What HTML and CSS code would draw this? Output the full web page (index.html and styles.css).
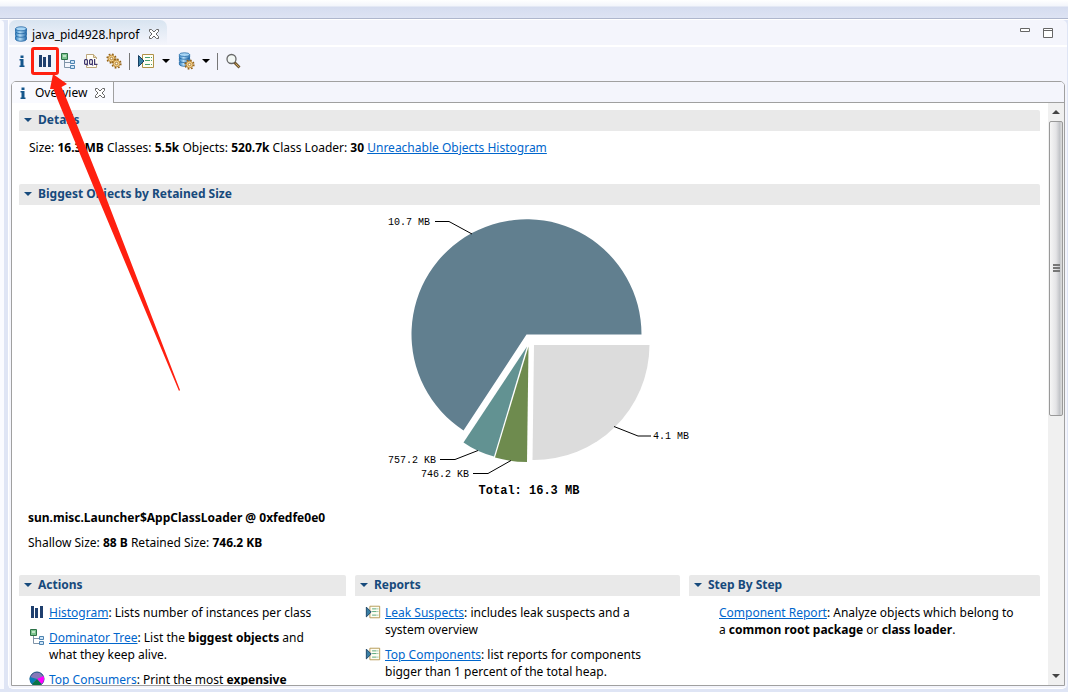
FILE: index.html
```html
<!DOCTYPE html>
<html lang="en">
<head>
<meta charset="utf-8">
<title>java_pid4928.hprof</title>
<link rel="stylesheet" href="styles.css">
</head>
<body>
<svg class="defs" aria-hidden="true">
  <defs>
    <linearGradient id="dbBlue" x1="0" x2="1" y1="0" y2="0"><stop offset="0" stop-color="#2f7fc0"/><stop offset=".4" stop-color="#b5dcf6"/><stop offset="1" stop-color="#2368a8"/></linearGradient>
    <symbol id="info" viewBox="0 0 16 16"><path fill="#14568c" d="M6.500 2.500h3v2.500h-3zM5.500 6h4v6.500h1v1.500h-5v-1.500h1v-5h-1z"/></symbol>
    <symbol id="histogram" viewBox="0 0 16 16"><path fill="#1f3f6e" d="M2 2h3v12H2zM6 4h3v10H6zM11 2h3v12h-3z"/></symbol>
    <symbol id="tree" viewBox="0 0 16 16"><path fill="none" stroke="#8094a8" d="M4.500 7v7.500H10M4.500 9.500H10"/><path fill="#7cc48e" stroke="#2d7147" d="M1.500 .5h6v6h-6z"/><path fill="#bfe3c6" d="M3 2h3v2H3z"/><path fill="#cfe5f8" stroke="#4d83b0" d="M10.500 7.500h4v3h-4zM10.500 12.500h4v3h-4z"/></symbol>
    <symbol id="db" viewBox="0 0 16 16"><g fill="url(#dbBlue)" stroke="#1f65a3" stroke-width=".8"><path d="M2.500 10.500v2.500c0 3 11 3 11 0v-2.500z"/><path d="M2.500 6.500V9c0 3 11 3 11 0V6.500z"/><path d="M2.500 3V5.500c0 3 11 3 11 0V3z"/><ellipse cx="8" cy="2.800" rx="5.500" ry="2" fill="#a9d6f5"/></g></symbol>
    <symbol id="gear" viewBox="0 0 12 12"><circle cx="6" cy="6" r="4.800" fill="none" stroke="#946318" stroke-width="1.600" stroke-dasharray="1.885 1.885"/><circle cx="6" cy="6" r="3.700" fill="#f3d18c" stroke="#a8701c" stroke-width=".8"/><circle cx="6" cy="6" r="1.400" fill="#fffaf0" stroke="#946318" stroke-width=".8"/></symbol>
    <symbol id="gears" viewBox="0 0 16 16"><use href="#gear" x="0" y="0" width="11" height="11"/><use href="#gear" x="5" y="5" width="11" height="11"/></symbol>
    <symbol id="oql" viewBox="0 0 16 16"><path fill="#fffdf5" stroke="#bda77c" d="M3.500 1.500h7l3 3v10h-10z"/><path fill="#ead9ae" stroke="#bda77c" d="M10.500 1.500v3h3"/><path fill="#fffdf5" d="M1 6h14v6H1z"/><path fill="none" stroke="#3f3770" stroke-width="1.200" d="M2.200 6.600h1.600l.6.8v3.200l-.6.800H2.200l-.6-.8V7.400zM3.500 10.500l1.500 2M7.200 6.600h1.600l.6.8v3.200l-.6.800H7.200l-.6-.8V7.400zM8.500 10.500l1.500 2M11.600 6v5.400H14.500"/></symbol>
    <symbol id="report" viewBox="0 0 18 16"><path fill="#fffef3" stroke="#b09248" d="M5.500 1.500h11v13h-11z"/><path fill="none" stroke="#49a071" d="M8 4.500h5M8 7.500h5M8 11.500h5M14 4.500h1M14 7.500h1M14 11.500h1"/><path fill="#377ea3" stroke="#173e62" d="M1.500 2.500v11L7 8z"/></symbol>
    <symbol id="query" viewBox="0 0 18 18"><use href="#db" x="0" y="0" width="15" height="15"/><use href="#gear" x="7" y="7" width="11" height="11"/></symbol>
    <symbol id="search" viewBox="0 0 16 16"><circle cx="6.500" cy="6" r="4.500" fill="#f2f7f4" stroke="#686868" stroke-width="1.300"/><path stroke="#6d5632" stroke-width="2.800" d="m9.500 9.500 5 5"/><path stroke="#d0a65c" d="m10.500 10.500 3.500 3.500"/></symbol>
    <symbol id="close" viewBox="0 0 12 12"><path fill="#fff" stroke="#666" d="M1.500 1.500h2L6 4l2.500-2.500h2v2L8 6l2.500 2.500v2h-2L6 8l-2.500 2.500h-2v-2L4 6 1.500 3.500z"/></symbol>
    <symbol id="pieicon" viewBox="0 0 16 16"><circle cx="8" cy="8" r="7" fill="#8578b8" stroke="#174f80"/><path fill="#087cb8" d="M8 8 3 13A7 7 0 0 1 1 6z"/><path fill="#f0f" d="M8 8l6.500-3a7 7 0 0 1-2 8z"/><path fill="#087448" d="m8 8 4.500 5A7 7 0 0 1 3 13z"/></symbol>
    <symbol id="down" viewBox="0 0 8 4"><path d="M0 0h8L4 4z" fill="currentColor"/></symbol>
  </defs>
</svg>
<div class="window">
  <div class="topband"></div>
  <div class="workspace">
    <div class="neighbour"></div>
    <main class="editor">
      <header class="filebar">
        <div class="filetab"><svg class="i16"><use href="#db"/></svg><span>java_pid4928.hprof</span><button aria-label="Close file"><svg class="i12"><use href="#close"/></svg></button></div>
        <div class="wincontrols">
          <button aria-label="Minimize"><svg width="10" height="12"><path fill="#fff" stroke="#666" d="M.5 1.500h9v3h-9z"/></svg></button>
          <button aria-label="Maximize"><svg width="10" height="12"><path fill="#fff" stroke="#666" d="M.5 1.500h9v9h-9zM.5 3.500h9"/></svg></button>
        </div>
      </header>
      <nav class="toolbar" aria-label="Heap tools">
        <button aria-label="Overview"><svg class="i16"><use href="#info"/></svg></button>
        <button aria-label="Histogram" class="marked"><svg class="i16"><use href="#histogram"/></svg></button>
        <button aria-label="Dominator tree"><svg class="i16"><use href="#tree"/></svg></button>
        <button aria-label="OQL"><svg class="i16"><use href="#oql"/></svg></button>
        <button aria-label="Thread overview"><svg class="i16"><use href="#gears"/></svg></button>
        <i class="sep"></i>
        <button aria-label="Run report" class="wide"><svg class="i18"><use href="#report"/></svg><svg class="caret"><use href="#down"/></svg></button>
        <button aria-label="Query browser" class="wide"><svg class="q18"><use href="#query"/></svg><svg class="caret"><use href="#down"/></svg></button>
        <i class="sep"></i>
        <button aria-label="Search"><svg class="i16"><use href="#search"/></svg></button>
      </nav>
      <section class="folder">
        <div class="innertabs"><div class="innertab"><svg class="i16"><use href="#info"/></svg><span>Overview</span><button aria-label="Close overview"><svg class="i12"><use href="#close"/></svg></button></div></div>
        <div class="body">
          <div class="page">
            <h2><svg class="twist"><use href="#down"/></svg>Details</h2>
            <p class="details">Size: <b>16.3 MB</b> Classes: <b>5.5k</b> Objects: <b>520.7k</b> Class Loader: <b>30</b> <a href="#unreachable">Unreachable Objects Histogram</a></p>
            <h2><svg class="twist"><use href="#down"/></svg>Biggest Objects by Retained Size</h2>
            <svg class="chart" viewBox="360 205 340 300" role="img" aria-label="Biggest objects by retained size">
              <path fill="#617f8f" d="M526.500 334.500h115a115 115 0 1 0-178 96z"/>
              <path fill="#629292" d="M527 346.500 463.500 442.500Q477 452 494 456.500z"/>
              <path fill="#6e8b4e" d="M528.500 346.500 495 457.500Q511 462 527 462z"/>
              <path fill="#dcdcdc" d="M534 345h115.500A115.500 115.500 0 0 1 532.500 460z"/>
              <path fill="none" stroke="#000" d="M435 221.500h14l23 12.500M440 459.500h15l23-9M473 473.500h15l23-13M614 426.500l24 9.500h13"/>
              <g class="labels"><text x="388" y="225">10.7 MB</text><text x="388" y="463">757.2 KB</text><text x="421" y="477">746.2 KB</text><text x="653" y="439">4.1 MB</text></g>
              <text class="total" x="529" y="494">Total: 16.3 MB</text>
            </svg>
            <p class="object"><b>sun.misc.Launcher$AppClassLoader @ 0xfedfe0e0</b></p>
            <p class="sizes">Shallow Size: <b>88 B</b> Retained Size: <b>746.2 KB</b></p>
            <div class="columns">
              <section>
                <h2><svg class="twist"><use href="#down"/></svg>Actions</h2>
                <ul>
                  <li><svg class="i16"><use href="#histogram"/></svg><p><a href="#histogram-view">Histogram</a>: Lists number of instances per class</p></li>
                  <li><svg class="i16"><use href="#tree"/></svg><p><a href="#dominator">Dominator Tree</a>: List the <b>biggest objects</b> and<br>what they keep alive.</p></li>
                  <li><svg class="i16"><use href="#pieicon"/></svg><p><a href="#consumers">Top Consumers</a>: Print the most <b>expensive</b></p></li>
                </ul>
              </section>
              <section>
                <h2><svg class="twist"><use href="#down"/></svg>Reports</h2>
                <ul>
                  <li><svg class="i18"><use href="#report"/></svg><p><a href="#leaks">Leak Suspects</a>: includes leak suspects and a<br>system overview</p></li>
                  <li><svg class="i18"><use href="#report"/></svg><p><a href="#components">Top Components</a>: list reports for components<br>bigger than 1 percent of the total heap.</p></li>
                </ul>
              </section>
              <section>
                <h2><svg class="twist"><use href="#down"/></svg>Step By Step</h2>
                <ul>
                  <li><span class="i16"></span><p><a href="#component-report">Component Report</a>: Analyze objects which belong to<br>a <b>common root package</b> or <b>class loader</b>.</p></li>
                </ul>
              </section>
            </div>
          </div>
          <div class="scroll" aria-hidden="true">
            <svg class="arrow up"><use href="#down"/></svg>
            <div class="track"><div class="thumb"><i></i><i></i><i></i></div></div>
            <svg class="arrow"><use href="#down"/></svg>
          </div>
        </div>
      </section>
    </main>
  </div>
</div>
<svg class="pointer" width="190" height="400" aria-hidden="true"><path fill="#ff2010" d="M53 74 67 84 61.500 87 67 100 107 200 180 390 179 391 99 200 57.700 100 53.500 89 50 89z"/></svg>
</body>
</html>
```
FILE: styles.css
```css
* { box-sizing: border-box; }
body { margin: 0; font: 12px/17px "Noto Sans", "Open Sans", sans-serif; color: #000; background: #dfe5f5; }
h2, p, ul { margin: 0; padding: 0; }
svg { flex: none; display: block; }
button { border: 0; padding: 0; background: none; display: flex; align-items: center; justify-content: center; }
a { color: #0066cc; }
.defs { position: absolute; width: 0; height: 0; }
.window { height: 100vh; display: flex; flex-direction: column; overflow: hidden; }
.topband { height: 20px; flex: none; border-bottom: 1px solid #fff; background: linear-gradient(#fff 0, #f3f5fb 6px, #d5dcef 7px, #dde3f3 18px, #aeb6cc 18px, #aeb6cc 19px); }
.workspace { flex: 1; min-height: 0; display: flex; gap: 4px; padding-bottom: 3px; }
.neighbour { width: 4px; background: #fafbff; border-radius: 0 4px 0 0; }
.editor { flex: 1; min-width: 0; display: flex; flex-direction: column; padding: 0 2px 2px; margin-right: 1px; background: #f4f5fc; border: solid #fff; border-width: 0 0 1px 1px; border-radius: 0 5px 5px 5px; }
.filebar { height: 27px; flex: none; display: flex; justify-content: space-between; margin: 0 -2px; padding-right: 14px; border-bottom: 2px solid #fff; }
.filetab { display: flex; align-items: center; gap: 3px; padding: 3px 7px 0 4px; border-radius: 7px 7px 0 0; background: linear-gradient(#d8e4f0, #f4f5fc); }
.filetab button { margin-left: 6px; }
.wincontrols { display: flex; align-items: center; gap: 13px; }
.toolbar { height: 34px; flex: none; display: flex; align-items: center; gap: 7px; padding: 0 3px 6px; }
.marked { position: relative; }
.marked::after { content: ""; position: absolute; inset: -6px; border: 3px solid #ff2010; border-radius: 3px; }
.wide { gap: 7px; }
.sep { width: 1px; height: 17px; background: #777; }
.i16 { width: 16px; height: 16px; flex: none; }
.i18 { width: 18px; height: 16px; }
.q18 { width: 18px; height: 18px; }
.i12 { width: 12px; height: 12px; }
.caret, .twist { width: 8px; height: 4px; }
.folder { flex: 1; min-height: 0; display: flex; flex-direction: column; background: #fff; border: 1px solid #a0a0a0; border-radius: 5px 5px 0 0; overflow: hidden; }
.innertabs { height: 21px; flex: none; background: linear-gradient(#a0a0a0, #a0a0a0) bottom / 100% 1px no-repeat #f4f5fc; }
.innertab { width: 102px; height: 21px; display: flex; align-items: center; gap: 4px; padding-left: 3px; border-right: 1px solid #a0a0a0; background: #f9faff; }
.innertab button { margin-left: 3px; }
.body { flex: 1; min-height: 0; display: flex; }
.page { flex: 1; min-width: 0; padding: 7px 8px 0 7px; overflow: hidden; }
h2 { height: 21px; display: flex; align-items: center; gap: 6px; padding: 0 5px 2px; color: #174a7c; background: #e9e9e9; font-size: 12px; line-height: 17px; border-radius: 2px 2px 0 0; }
.details { padding: 8px 10px 28px; }
.chart { width: 340px; height: 300px; margin: 0 auto; }
.labels { font: 10px "Liberation Mono", monospace; }
.total { font: bold 12px "Liberation Mono", monospace; text-anchor: middle; }
.object { padding: 4px 9px; }
.sizes { padding: 4px 9px 24px; }
.columns { display: grid; grid-template-columns: 327fr 325fr 351fr; gap: 9px; }
ul { list-style: none; display: flex; flex-direction: column; gap: 8px; padding: 8px 10px; }
li { display: flex; gap: 4px; white-space: nowrap; }
li .i18 { width: 16px; overflow: visible; }
.scroll { width: 16px; display: flex; flex-direction: column; align-items: center; background: #f0f0f0; padding: 7px 0; }
.arrow { width: 8px; height: 4px; color: #444; }
.up { transform: rotate(180deg); }
.track { flex: 1; align-self: stretch; padding: 7px 1px; }
.thumb { height: 54%; display: flex; flex-direction: column; align-items: center; justify-content: center; gap: 1px; background: linear-gradient(90deg, #f6f6f6, #e4e4e6 50%, #c3c5c9 80%, #dedede); border: 1px solid #999; border-radius: 2px; }
.thumb i { width: 7px; height: 2px; background: #777; }
.pointer { position: absolute; left: 0; top: 0; pointer-events: none; }
```
